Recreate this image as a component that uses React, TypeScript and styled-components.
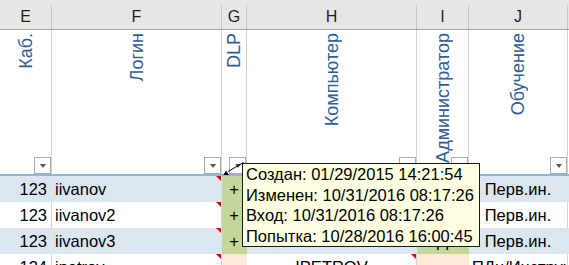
import styled, { createGlobalStyle } from 'styled-components'

const GlobalStyle = createGlobalStyle`
  html, body {
    margin: 0;
    padding: 0;
    background: #fff;
    overflow: hidden;
  }
  body {
    font-family: 'Liberation Sans', Arial, sans-serif;
  }
`

const COLS = '52px 170px 25px 170px 52px 99px'

const BAND = '#dce6f1'
const GREEN = '#c4d79b'
const PEACH = '#fde9d9'
const GRID = '#d4d4d4'

const Sheet = styled.div`
  position: relative;
  width: 569px;
  height: 265px;
  overflow: hidden;
`

const LetterRow = styled.div`
  display: grid;
  grid-template-columns: ${COLS};
  height: 29px;
  background: #e6e6e6;
  border-bottom: 1px solid #a6a6a6;
`

const Letter = styled.div`
  margin-top: 5px;
  border-right: 1px solid #c6c6c6;
  display: flex;
  align-items: center;
  justify-content: center;
  font-size: 16px;
  color: #1e1e1e;
`

const TitleRow = styled.div`
  display: grid;
  grid-template-columns: ${COLS};
  height: 144px;
  border-bottom: 2px solid #95b3d7;
`

const TitleCell = styled.div`
  position: relative;
  display: flex;
  justify-content: center;
  padding-top: 3px;
  border-right: 1px solid ${GRID};
`

const VerticalText = styled.span`
  writing-mode: vertical-rl;
  transform: rotate(180deg);
  white-space: nowrap;
  font-size: 18px;
  line-height: 1;
  color: #2f5d94;
  height: max-content;
`

const FilterButton = styled.div`
  position: absolute;
  right: 0;
  bottom: 0;
  width: 17px;
  height: 17px;
  box-sizing: border-box;
  border: 1px solid #ababab;
  background: #fdfdfd;
  display: flex;
  align-items: center;
  justify-content: center;

  &::after {
    content: '';
    border-left: 3.5px solid transparent;
    border-right: 3.5px solid transparent;
    border-top: 4px solid #595959;
    margin-top: 1px;
  }
`

const DataRow = styled.div<{ $band?: boolean }>`
  display: grid;
  grid-template-columns: ${COLS};
  height: 26px;
  background: ${({ $band }) => ($band ? BAND : '#fff')};
  --line: ${({ $band }) => ($band ? BAND : GRID)};
`

const Cell = styled.div<{ $fill?: string; $align?: string; $color?: string; $note?: boolean; $pad?: number }>`
  position: relative;
  display: flex;
  align-items: center;
  justify-content: ${({ $align }) => $align || 'flex-start'};
  padding: 0 ${({ $pad }) => $pad ?? 3}px;
  overflow: hidden;
  white-space: nowrap;
  font-size: 16.5px;
  color: ${({ $color }) => $color || '#000'};
  background: ${({ $fill }) => $fill || 'transparent'};
  border-right: 1px solid ${({ $fill }) => $fill || 'var(--line)'};

  &::after {
    content: '';
    display: ${({ $note }) => ($note ? 'block' : 'none')};
    position: absolute;
    top: 0;
    right: 0;
    border-top: 5px solid #e00000;
    border-left: 5px solid transparent;
  }
`

const Tooltip = styled.div`
  position: absolute;
  left: 242px;
  top: 163px;
  width: 238px;
  height: 84px;
  box-sizing: border-box;
  border: 1px solid #1a1a1a;
  background: #ffffe1;
  padding: 0 3px;
  font-size: 16.5px;
  line-height: 20.5px;
  color: #000;
  white-space: nowrap;
`

const Pointer = styled.svg`
  position: absolute;
  left: 218px;
  top: 158px;
  overflow: visible;
`

const letters = ['E', 'F', 'G', 'H', 'I', 'J']
const titles = ['Каб.', 'Логин', 'DLP', 'Компьютер', 'Администратор', 'Обучение']

// H and I of the first two rows sit under the comment box, only row 3 peeks out
const rows = [
  { band: true, num: '123', login: 'iivanov', pc: '', admin: '', course: 'Перв.ин.' },
  { band: false, num: '123', login: 'iivanov2', pc: '', admin: '', course: 'Перв.ин.' },
  { band: true, num: '123', login: 'iivanov3', pc: 'IIVANOV3', admin: 'Д', course: 'Перв.ин.' },
]

const notes = [
  'Создан: 01/29/2015 14:21:54',
  'Изменен: 10/31/2016 08:17:26',
  'Вход: 10/31/2016 08:17:26',
  'Попытка: 10/28/2016 16:00:45',
]

export default function App() {
  return (
    <Sheet>
      <GlobalStyle />
      <LetterRow>
        {letters.map((l) => (
          <Letter key={l}>{l}</Letter>
        ))}
      </LetterRow>

      <TitleRow>
        {titles.map((t) => (
          <TitleCell key={t}>
            <VerticalText>{t}</VerticalText>
            <FilterButton />
          </TitleCell>
        ))}
      </TitleRow>

      {rows.map((r) => (
        <DataRow key={r.login} $band={r.band}>
          <Cell $align="flex-end" $pad={4}>{r.num}</Cell>
          <Cell $note>{r.login}</Cell>
          <Cell $fill={GREEN} $align="center">+</Cell>
          <Cell $align="center" $color="#ff0000">{r.pc}</Cell>
          <Cell $fill={GREEN} $align="center">{r.admin}</Cell>
          <Cell $align="center">{r.course}</Cell>
        </DataRow>
      ))}

      <DataRow>
        <Cell $align="flex-end" $pad={4}>124</Cell>
        <Cell $note>ipetrov</Cell>
        <Cell $fill={PEACH} />
        <Cell $align="center" $note>IPETROV</Cell>
        <Cell $fill={PEACH} />
        <Cell>ПДн/Инструктаж</Cell>
      </DataRow>

      <Tooltip>
        {notes.map((n) => (
          <div key={n}>{n}</div>
        ))}
      </Tooltip>

      <Pointer width="30" height="20" viewBox="0 0 30 20">
        <line x1="10" y1="13.5" x2="25.5" y2="4.5" stroke="#000" strokeWidth="1" />
        <polygon points="5.3,17 11,17 8,12.5" fill="#000" />
      </Pointer>
    </Sheet>
  )
}
